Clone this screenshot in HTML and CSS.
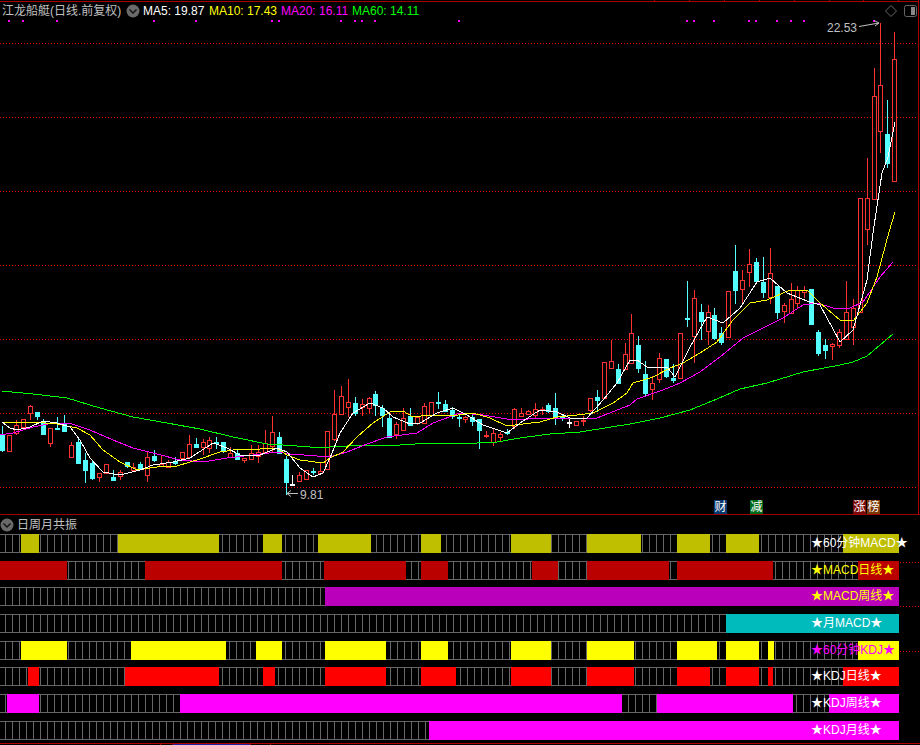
FILE: index.html
```html
<!DOCTYPE html>
<html lang="zh-CN">
<head>
<meta charset="utf-8">
<title>江龙船艇 日线</title>
<link rel="stylesheet" href="styles.css">
</head>
<body>
<main class="terminal">
  <section class="chart">
    <svg id="kline" class="kline" width="919" height="514" viewBox="0 0 919 514" xmlns="http://www.w3.org/2000/svg"></svg>
    <header class="legend">
      <span class="stock">江龙船艇(日线.前复权)</span>
      <svg class="chev" width="14" height="14" viewBox="0 0 14 14"><circle cx="7" cy="7" r="6.5"/><path d="M3.5 5.5 7 9l3.500-3.500"/></svg>
      <span class="ma ma5">MA5: 19.87</span>
      <span class="ma ma10">MA10: 17.43</span>
      <span class="ma ma20">MA20: 16.11</span>
      <span class="ma ma60">MA60: 14.11</span>
    </header>
    <div class="tools">
      <svg width="12" height="12" viewBox="0 0 12 12"><path class="tool-line" d="M6 .5 11.500 6 6 11.500 .5 6Z"/></svg>
      <svg width="13" height="12" viewBox="0 0 13 12"><rect class="tool-line" x=".5" y=".5" width="12" height="11" rx="2"/><rect class="tool-fill" x="7" y="2" width="4" height="8"/></svg>
    </div>
    <div class="marks marks-a"><b class="mark blue">财</b></div>
    <div class="marks marks-b"><b class="mark green">减</b></div>
    <div class="marks marks-c"><b class="mark red">涨</b><b class="mark brown">榜</b></div>
  </section>
  <section class="panel">
    <header class="panel-title">
      <svg class="chev" width="14" height="14" viewBox="0 0 14 14"><circle cx="7" cy="7" r="6.500"/><path d="M3.500 5.500 7 9l3.500-3.500"/></svg>
      <span>日周月共振</span>
    </header>
    <div class="rows">
      <div class="row" data-fill="olive" data-segs="21-39,118-219,263-282,318-371,421-441,511-551,587-641,677-710,726-759,843-899"><span class="tag white">★60分钟MACD★</span></div>
      <div class="row" data-fill="darkred" data-segs="0-67,145-282,324-406,421-448,532-558,587-669,677-773,858-899"><span class="tag yellow">★MACD日线★</span></div>
      <div class="row" data-fill="purple" data-segs="325-899"><span class="tag yellow">★MACD周线★</span></div>
      <div class="row" data-fill="teal" data-segs="726-899"><span class="tag white">★月MACD★</span></div>
      <div class="row" data-fill="yellow" data-segs="21-67,131-226,256-282,325-386,421-448,511-551,587-634,677-717,726-759,768-774,858-899"><span class="tag magenta">★60分钟KDJ★</span></div>
      <div class="row" data-fill="red" data-segs="28-39,125-219,263-275,325-386,421-456,511-551,587-634,677-710,726-759,768-773,843-899"><span class="tag white">★KDJ日线★</span></div>
      <div class="row" data-fill="pink" data-segs="7-39,180-622,657-793,829-899"><span class="tag white">★KDJ周线★</span></div>
      <div class="row" data-fill="pink" data-segs="429-899"><span class="tag white">★KDJ月线★</span></div>
    </div>
    <svg class="gutter" width="20" height="150" viewBox="0 0 20 150">
      <path d="M0 47.500H20M0 91.500H20M0 136.500H20"/>
    </svg>
    <svg class="scroll" width="920" height="2" viewBox="0 0 920 2">
      <path class="scroll-line" d="M0 .5H920M160 1.500h1M172 1.500h1M250 1.500h1M270 1.500h1"/>
      <path class="scroll-thumb" d="M173 1.500H250"/>
    </svg>
  </section>
</main>
<script src="chart.js"></script>
</body>
</html>
```
FILE: styles.css
```css
html, body {
  margin: 0;
  padding: 0;
  background: #000;
}

.terminal {
  width: 920px;
  height: 745px;
  overflow: hidden;
  background: #000;
  font-family: "Liberation Sans", "Noto Sans CJK SC", sans-serif;
  font-size: 12px;
  line-height: 14px;
  color: #c0c0c0;
}

/* upper chart */
.chart {
  position: relative;
  height: 514px;
  border-bottom: 1px solid #a00000;
}

.kline {
  display: block;
}

.legend {
  position: absolute;
  top: 4px;
  left: 2px;
  display: flex;
  align-items: center;
  white-space: nowrap;
}

.stock {
  width: 124px;
}

.legend .chev {
  margin-right: 3px;
}

.chev circle {
  fill: #6a6a6a;
}

.chev path {
  fill: none;
  stroke: #111;
  stroke-width: 1.4;
}

.ma5 { width: 66px; color: #fff; }
.ma10 { width: 72px; color: #ff0; }
.ma20 { width: 71px; color: #f0f; }
.ma60 { color: #0f0; }

.tools {
  position: absolute;
  top: 5px;
  left: 885px;
  display: flex;
  gap: 7px;
}

.tool-line {
  fill: none;
  stroke: #666;
}

.tool-fill {
  fill: #888;
}

.marks {
  position: absolute;
  top: 500px;
  display: flex;
  gap: 1px;
}

.marks-a { left: 714px; }
.marks-b { left: 750px; }
.marks-c { left: 853px; }

.mark {
  width: 13px;
  height: 14px;
  font-weight: 400;
  font-size: 12px;
  line-height: 14px;
  text-align: center;
  color: #fff;
}

.blue { background: #0a3a70; }
.green { background: #006a1a; }
.red { background: #7a0a0a; }
.brown { background: #7a3a0a; }

/* lower indicator panel */
.panel {
  position: relative;
  height: 230px;
}

.panel-title {
  display: flex;
  align-items: center;
  gap: 3px;
  height: 19px;
  padding-left: 0;
}

.rows {
  display: grid;
  grid-auto-rows: 18.9px;
  row-gap: 7.8px;
  width: 899px;
}

.row {
  position: relative;
  display: flex;
  box-sizing: border-box;
  overflow: visible;
  background-color: #000;
  background-image:
    linear-gradient(#666, #666),
    linear-gradient(#666, #666),
    repeating-linear-gradient(to right, transparent 0, transparent 5px, #666 5px, #666 6px, transparent 6px, transparent 7px);
  background-size: 100% 1px, 100% 1px, 100% 100%;
  background-position: 0 0, 0 100%, 0 0;
  background-repeat: no-repeat;
}

.gap {
  flex: none;
}

.seg {
  flex: none;
}

.row[data-fill="olive"] .seg { background: #bfbf00; }
.row[data-fill="darkred"] .seg { background: #bb0000; }
.row[data-fill="purple"] .seg { background: #bb00bb; }
.row[data-fill="teal"] .seg { background: #00bbbb; }
.row[data-fill="yellow"] .seg { background: #ffff00; }
.row[data-fill="red"] .seg { background: #ff0000; }
.row[data-fill="pink"] .seg { background: #ff00ff; }

.tag {
  position: absolute;
  top: 2px;
  left: 811px;
  white-space: nowrap;
  line-height: 15px;
}

.white { color: #fff; }
.yellow { color: #ff0; }
.magenta { color: #f0f; }

.gutter {
  position: absolute;
  top: 0;
  left: 900px;
  margin-top: 0;
}

.gutter path {
  fill: none;
  stroke: #e00000;
  stroke-dasharray: 1 2;
}

.scroll {
  position: absolute;
  left: 0;
  top: 228px;
}

.scroll-line {
  fill: none;
  stroke: #b00000;
}

.scroll-thumb {
  fill: none;
  stroke: #2020a0;
}
```
FILE: chart.js
```js
(function () {
  var NS = 'http://www.w3.org/2000/svg';
  var svg = document.getElementById('kline');

  function el(name, attrs, text) {
    var n = document.createElementNS(NS, name);
    for (var k in attrs) n.setAttribute(k, attrs[k]);
    if (text) n.textContent = text;
    svg.appendChild(n);
    return n;
  }

  var RED = '#ff3232', CYAN = '#54ffff', WHITE = '#ffffff';

  // frame
  el('path', { d: 'M0 1.5H919M918.500 0V514', stroke: '#a80000', fill: 'none', 'shape-rendering': 'crispEdges' });
  var ticks = '';
  for (var t = 0; t < 8; t++) ticks += 'M' + (654.5 + t * 34.9) + ' 0V1';
  el('path', { d: ticks, stroke: '#a80000', 'shape-rendering': 'crispEdges' });

  // dotted price grid
  [43, 117, 191, 265, 339, 413, 487].forEach(function (y) {
    el('path', { d: 'M0 ' + (y + 0.5) + 'H918', stroke: '#ff0000', 'stroke-dasharray': '1 2', 'shape-rendering': 'crispEdges' });
  });

  // signal dots
  [9, 23, 57, 154, 196, 272, 279, 341, 355, 362, 375, 459, 687, 694, 714, 749, 756, 777, 791, 804, 874].forEach(function (x) {
    el('rect', { x: x - 1, y: 20, width: 2, height: 2, fill: '#ff00ff' });
  });

  // candles: [zoom x, kind, body top, body bottom, wick top, wick bottom]
  var groups = [
    { ox: 0, oy: 380, list: [
      [7,'c',163,210,138,215],[28,'r',165,212,165,212],[49,'r',136,158,120,165],[70,'r',118,142,118,142],
      [91,'r',78,100,75,120],[112,'c',97,108,97,120],[130,'c',125,163,118,165],[151,'r',145,188,145,200],
      [172,'c',143,148,112,148],[193,'c',133,152,105,155],[214,'r',196,232,185,232],[235,'c',185,248,175,250],
      [256,'c',241,269,218,308],[277,'c',248,295,240,300],[298,'r',280,292,280,305],[319,'r',253,278,253,280],
      [340,'c',290,300,270,302],[361,'r',277,287,270,300],[382,'c',247,258,247,265],[400,'r',262,270,250,275],
      [421,'c',252,267,247,270],[442,'r',230,285,212,305],[463,'c',228,240,210,245],[484,'r',253,257,225,260],
      [505,'r',245,262,240,262],[526,'c',242,248,232,255],[547,'r',217,235,215,240],[568,'r',192,230,165,232],
      [589,'c',192,200,175,205],[610,'r',186,200,178,225],[628,'r',181,205,170,220],[649,'c',187,190,172,207],
      [670,'c',186,213,186,220],[691,'r',219,230,200,232],[712,'c',218,237,208,240],[733,'r',233,240,233,248],
      [754,'r',220,238,195,240],[775,'r',217,228,195,248],[796,'r',188,215,150,215],[817,'r',156,198,108,215],
      [838,'c',171,220,155,222],[859,'c',237,305,228,345],[876,'w',312,314,285,314],[898,'r',286,304,275,305],
      [919,'r',271,298,271,298],[940,'c',273,277,265,285],[961,'r',272,279,250,282],[982,'r',154,268,154,268]
    ]},
    { ox: 330, oy: 310, list: [
      [13,'r',313,387,240,392],[34,'r',259,311,228,311],[55,'r',277,290,207,320],[76,'c',280,310,262,318],
      [97,'r',283,292,267,318],[118,'r',265,293,260,308],[136,'c',252,285,243,318],[157,'c',295,316,285,350],
      [178,'c',324,381,310,385],[199,'r',343,372,335,388],[220,'r',325,359,295,362],[241,'c',318,345,295,348],
      [262,'r',321,340,318,345],[283,'r',289,339,280,341],[304,'r',277,315,277,315],[325,'c',276,278,247,298],
      [346,'c',282,302,270,305],[367,'c',300,317,290,327],[388,'c',320,322,308,350],[406,'r',321,326,318,340],
      [427,'c',320,332,308,348],[448,'c',327,359,327,416],[469,'r',376,379,362,384],[490,'r',370,397,358,407],
      [511,'r',373,381,367,392],[532,'c',367,369,357,375],[553,'r',298,348,295,358],[574,'r',309,319,294,320],
      [595,'r',304,311,301,315],[616,'r',298,316,280,325],[637,'r',298,301,292,315],[655,'c',285,304,280,308],
      [676,'c',295,320,249,345],[697,'c',318,322,315,332],[718,'w',336,338,320,354],[739,'r',332,344,332,344],
      [760,'r',330,332,318,348],[781,'r',265,299,265,305],[802,'c',262,270,240,305],[823,'r',157,263,157,265],
      [844,'r',154,173,90,176],[865,'c',178,218,162,222],[886,'r',133,176,98,180]
    ]},
    { ox: 600, oy: 230, list: [
      [94,'r',310,398,252,398],[115,'c',345,413,318,430],[136,'c',432,488,392,498],[157,'r',460,478,438,510],
      [178,'r',385,448,370,458],[199,'c',387,438,387,445],[220,'c',444,449,402,458],[241,'r',310,445,310,445],
      [262,'c',264,266,153,290],[283,'r',205,317,180,398],[304,'c',246,273,222,330],[325,'r',247,304,225,345],
      [343,'c',255,325,235,330],[364,'c',310,336,290,346],[385,'r',184,320,184,320],[406,'c',123,180,45,222],
      [427,'r',151,178,120,225],[448,'r',103,125,57,172],[469,'c',97,152,85,155],[490,'c',155,186,82,203],
      [511,'r',130,200,54,222],[532,'c',168,245,168,268],[553,'r',226,244,218,278],[574,'r',208,248,160,250],
      [592,'r',180,220,168,238],[613,'r',180,187,168,205],[634,'c',177,282,177,285],[655,'c',306,369,300,378],
      [676,'c',345,361,327,387],[697,'r',343,349,338,390],[718,'r',307,346,298,353],[739,'r',245,327,153,330],
      [760,'r',235,290,208,345]
    ]},
    { ox: 780, oy: 0, list: [
      [241,'r',595,936,595,936],[262,'r',595,686,475,735],[283,'r',289,596,205,596],[301,'r',256,394,68,458],
      [322,'c',402,490,300,503],[343,'r',178,542,96,542]
    ]}
  ];

  var colors = { r: RED, c: CYAN, w: WHITE };
  groups.forEach(function (g) {
    g.list.forEach(function (d) {
      var x = Math.floor(g.ox + d[0] / 3);
      var col = colors[d[1]];
      var top = Math.round(g.oy + d[2] / 3), bot = Math.round(g.oy + d[3] / 3);
      var hi = Math.round(g.oy + d[4] / 3), lo = Math.round(g.oy + d[5] / 3);
      el('path', { d: 'M' + (x + 0.5) + ' ' + hi + 'V' + lo, stroke: col, 'shape-rendering': 'crispEdges' });
      el('rect', {
        x: x - 1.5, y: top + 0.5, width: 4, height: Math.max(bot - top, 1),
        fill: d[1] === 'r' ? '#000' : col, stroke: col, 'shape-rendering': 'crispEdges'
      });
    });
  });

  // moving averages
  var lines = {
    '#00ff00': '2,391 33,394 67,398 100,408 133,417 167,423 200,429 233,437 267,444 283,445 310,447 330,447 347,446 367,445 400,445 430,443 477,443 497,442 520,438 550,434 580,432 630,424 660,418 690,410 717,399 740,389 767,383 803,372 840,365 853,362 867,356 880,345 893,334',
    '#ff00ff': '0,435 13,433 33,427 53,423 72,424 90,430 113,440 133,448 157,454 180,460 203,462 227,458 253,455 277,452 290,454 317,456 330,457 347,452 367,444 387,437 417,433 433,423 460,413 483,415 513,420 543,418 573,419 597,418 630,405 637,399 663,390 680,383 700,372 720,357 743,338 763,328 783,318 803,305 817,303 833,308 850,308 863,302 880,277 893,262',
    '#ffff00': '2,422 33,422 57,424 77,428 90,435 103,450 120,462 137,470 157,467 177,466 200,459 220,452 240,449 260,449 277,448 287,455 300,460 323,463 330,458 343,452 357,437 373,423 390,412 403,411 413,417 430,415 450,416 473,413 490,418 507,426 523,424 540,422 557,417 577,415 593,413 613,403 627,393 633,383 653,377 670,368 683,363 700,353 717,342 733,320 750,303 767,300 790,290 807,290 820,303 840,320 853,321 867,303 877,277 889,232 895,212',
    '#ffffff': '2,422 10,428 17,430 30,427 43,421 57,423 70,427 80,440 90,458 103,472 120,475 140,470 153,465 173,462 190,458 213,443 227,448 240,455 260,455 277,448 287,452 300,468 313,477 323,473 330,458 340,433 353,413 370,403 383,408 393,417 410,424 420,423 437,413 453,408 467,415 483,425 507,433 520,423 540,410 557,412 570,418 587,418 603,400 617,383 630,360 637,360 647,367 667,367 675,377 690,347 707,317 723,323 740,308 757,282 770,278 787,293 807,301 820,305 840,342 853,330 867,280 873,233 882,173 888,157 895,122'
  };
  ['#00ff00', '#ff00ff', '#ffff00', '#ffffff'].forEach(function (c) {
    el('polyline', { points: lines[c], fill: 'none', stroke: c, 'shape-rendering': 'crispEdges' });
  });

  // extreme price callouts
  var gray = '#c0c0c0';
  var font = { fill: gray, 'font-family': '"Liberation Sans", sans-serif', 'font-size': 12 };
  el('path', { d: 'M859 26.500 879 23M874 20.500 879 23 875 26', fill: 'none', stroke: gray });
  var high = el('text', { x: 827, y: 32 }, '22.53');
  var low = el('text', { x: 300, y: 499 }, '9.81');
  [high, low].forEach(function (n) { for (var k in font) n.setAttribute(k, font[k]); });
  el('path', { d: 'M298 493.500H287M291 490.500 287 493.500 291 496.500', fill: 'none', stroke: gray });

  // indicator rows
  Array.prototype.forEach.call(document.querySelectorAll('.row'), function (row) {
    var pos = 0;
    var frag = document.createDocumentFragment();
    row.getAttribute('data-segs').split(',').forEach(function (s) {
      var p = s.split('-').map(Number);
      if (p[0] > pos) {
        var g = document.createElement('i');
        g.className = 'gap';
        g.style.width = (p[0] - pos) + 'px';
        frag.appendChild(g);
      }
      var f = document.createElement('i');
      f.className = 'seg';
      f.style.width = (p[1] - p[0]) + 'px';
      frag.appendChild(f);
      pos = p[1];
    });
    row.insertBefore(frag, row.firstChild);
  });
})();
```
